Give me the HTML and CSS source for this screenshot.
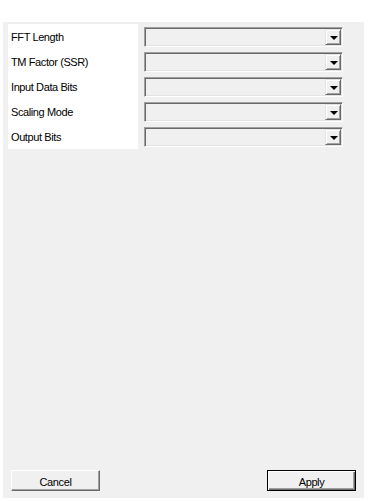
FILE: index.html
```html
<!doctype html>
<html>
<head>
<meta charset="utf-8">
<title>FFT Settings</title>
<link rel="stylesheet" href="styles.css">
</head>
<body>
<div class="panel">
	<!--参数表单-->
	<div class="form">
		<div class="label">FFT Length</div>
		<div class="field"><div class="combo"><span class="drop"><i class="arrow"></i></span></div></div>
		<div class="label">TM Factor (SSR)</div>
		<div class="field"><div class="combo"><span class="drop"><i class="arrow"></i></span></div></div>
		<div class="label">Input Data Bits</div>
		<div class="field"><div class="combo"><span class="drop"><i class="arrow"></i></span></div></div>
		<div class="label">Scaling Mode</div>
		<div class="field"><div class="combo"><span class="drop"><i class="arrow"></i></span></div></div>
		<div class="label">Output Bits</div>
		<div class="field"><div class="combo"><span class="drop"><i class="arrow"></i></span></div></div>
	</div>
	<!--底部按钮-->
	<div class="buttons">
		<button class="btn">Cancel</button>
		<button class="btn default">Apply</button>
	</div>
</div>
</body>
</html>
```

FILE: styles.css
```css
	body
	{
		margin: 0;
		background: #ffffff;
		font-family: "Liberation Sans", Arial, sans-serif;
		font-size: 11px;
		letter-spacing: -0.4px;
		color: #000000;
	}
	.panel
	{
		margin: 22px 4px 0 3px;
		height: 476px;
		background: #f0f0f0;
		display: flex;
		flex-direction: column;
	}
	/*表单*/
	.form
	{
		display: grid;
		grid-template-columns: 130px 199px;
		column-gap: 6px;
		margin: 2px 0 0 5px;
	}
	.label
	{
		background: #ffffff;
		height: 25px;
		line-height: 26px;
		padding-left: 3px;
	}
	.field
	{
		padding-top: 3px;
		height: 25px;
		box-sizing: border-box;
	}
	.combo
	{
		box-sizing: border-box;
		width: 199px;
		height: 20px;
		background: #f0f0f0;
		border: 1px solid;
		border-color: #a0a0a0 #ffffff #ffffff #a0a0a0;
		box-shadow: inset 1px 1px #696969, inset -1px -1px #e3e3e3;
		padding: 1px;
		display: flex;
		justify-content: flex-end;
	}
	.drop
	{
		box-sizing: border-box;
		width: 16px;
		height: 16px;
		background: #f0f0f0;
		border: 1px solid;
		border-color: #e3e3e3 #696969 #696969 #e3e3e3;
		box-shadow: inset 1px 1px #ffffff, inset -1px -1px #a0a0a0;
		display: flex;
		align-items: center;
		justify-content: center;
	}
	.arrow
	{
		width: 0;
		height: 0;
		border-left: 4px solid transparent;
		border-right: 4px solid transparent;
		border-top: 4px solid #000000;
		margin: 1px 0 0 1px;
	}
	/*按钮*/
	.buttons
	{
		margin-top: auto;
		display: flex;
		justify-content: space-between;
		padding: 0 8px 7px 8px;
	}
	.btn
	{
		box-sizing: border-box;
		width: 89px;
		height: 21px;
		background: #f0f0f0;
		font-family: "Liberation Sans", Arial, sans-serif;
		font-size: 11px;
		letter-spacing: -0.4px;
		color: #000000;
		padding: 2px 0 0 0;
		border: 1px solid;
		border-color: #ffffff #696969 #696969 #ffffff;
		box-shadow: inset -1px -1px #a0a0a0;
	}
	.default
	{
		border-color: #000000;
		box-shadow: inset 1px 1px #ffffff, inset -1px -1px #696969, inset -2px -2px #a0a0a0;
	}
```
